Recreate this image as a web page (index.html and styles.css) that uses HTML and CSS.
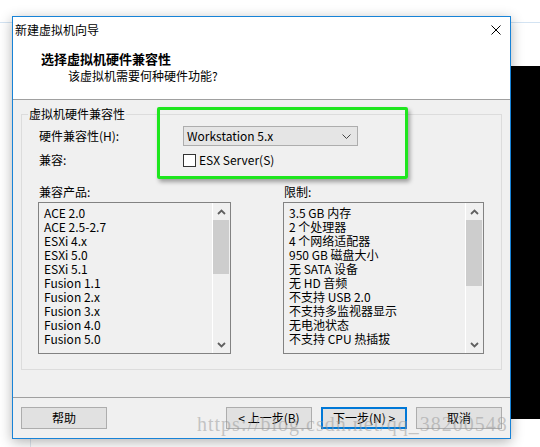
FILE: index.html
```html
<!DOCTYPE html>
<html lang="zh-CN">
<head>
  <meta charset="UTF-8" />
  <title>新建虚拟机向导</title>
  <link rel="stylesheet" href="styles.css">
</head>
<body>
  <div class="desk">
    <div class="back-line"></div>
    <div class="back-edge"></div>
    <div class="black-win"></div>

    <div class="dialog">
      <div class="titlebar">
        <span class="title">新建虚拟机向导</span>
        <svg class="close" width="10" height="10" viewBox="0 0 10 10">
          <path d="M0.5 0.5 L9.5 9.5 M9.5 0.5 L0.5 9.5" stroke="#000" stroke-width="1" fill="none" />
        </svg>
      </div>

      <div class="header">
        <div class="heading">选择虚拟机硬件兼容性</div>
        <div class="subheading">该虚拟机需要何种硬件功能?</div>
      </div>

      <div class="content">
        <div class="group">
          <span class="group-title">虚拟机硬件兼容性</span>

          <div class="form-row">
            <span class="label">硬件兼容性(H):</span>
            <div class="select">
              <span>Workstation 5.x</span>
              <svg width="9" height="5" viewBox="0 0 9 5">
                <polyline points="0.5,0.5 4.5,4.5 8.5,0.5" stroke="#444" stroke-width="1" fill="none" />
              </svg>
            </div>
          </div>

          <div class="form-row">
            <span class="label">兼容:</span>
            <label class="check"><span class="box"></span>ESX Server(S)</label>
          </div>

          <div class="lists">
            <div class="list-col">
              <div class="list-label">兼容产品:</div>
              <div class="listbox">
                <ul class="items">
                  <li>ACE 2.0</li>
                  <li>ACE 2.5-2.7</li>
                  <li>ESXi 4.x</li>
                  <li>ESXi 5.0</li>
                  <li>ESXi 5.1</li>
                  <li>Fusion 1.1</li>
                  <li>Fusion 2.x</li>
                  <li>Fusion 3.x</li>
                  <li>Fusion 4.0</li>
                  <li>Fusion 5.0</li>
                </ul>
                <div class="scrollbar">
                  <div class="arrow">
                    <svg width="9" height="6" viewBox="0 0 9 6"><polyline points="1,5 4.5,1.5 8,5" stroke="#606060" stroke-width="1.8" fill="none" /></svg>
                  </div>
                  <div class="track"><div class="thumb thumb-left"></div></div>
                  <div class="arrow">
                    <svg width="9" height="6" viewBox="0 0 9 6"><polyline points="1,1 4.5,4.5 8,1" stroke="#606060" stroke-width="1.8" fill="none" /></svg>
                  </div>
                </div>
              </div>
            </div>

            <div class="list-col">
              <div class="list-label">限制:</div>
              <div class="listbox">
                <ul class="items">
                  <li>3.5 GB 内存</li>
                  <li>2 个处理器</li>
                  <li>4 个网络适配器</li>
                  <li>950 GB 磁盘大小</li>
                  <li>无 SATA 设备</li>
                  <li>无 HD 音频</li>
                  <li>不支持 USB 2.0</li>
                  <li>不支持多监视器显示</li>
                  <li>无电池状态</li>
                  <li>不支持 CPU 热插拔</li>
                </ul>
                <div class="scrollbar">
                  <div class="arrow">
                    <svg width="9" height="6" viewBox="0 0 9 6"><polyline points="1,5 4.5,1.5 8,5" stroke="#606060" stroke-width="1.8" fill="none" /></svg>
                  </div>
                  <div class="track"><div class="thumb thumb-right"></div></div>
                  <div class="arrow">
                    <svg width="9" height="6" viewBox="0 0 9 6"><polyline points="1,1 4.5,4.5 8,1" stroke="#606060" stroke-width="1.8" fill="none" /></svg>
                  </div>
                </div>
              </div>
            </div>
          </div>
        </div>
      </div>

      <div class="footer">
        <button class="btn">帮助</button>
        <div class="btn-group">
          <button class="btn">&lt; 上一步(B)</button>
          <button class="btn btn-default">下一步(N) &gt;</button>
          <button class="btn">取消</button>
        </div>
      </div>
    </div>

    <div class="highlight"></div>
    <div class="watermark">https://blog.csdn.net/qq_38200548</div>
  </div>
</body>
</html>
```

FILE: styles.css
```css
* {
  box-sizing: border-box;
}

html, body {
  margin: 0;
  padding: 0;
  width: 540px;
  height: 447px;
  overflow: hidden;
  background: #fff;
  font-family: "Noto Sans CJK SC", sans-serif;
  font-size: 12px;
  color: #000;
}

.desk {
  position: relative;
  width: 540px;
  height: 447px;
}

/* window behind the wizard */
.back-line {
  position: absolute;
  left: 0;
  right: 0;
  top: 22px;
  height: 1px;
  background: #d3e3f2;
}

.back-edge {
  position: absolute;
  left: 30px;
  top: 438px;
  bottom: 0;
  width: 1px;
  background: #dfe7ef;
}

.black-win {
  position: absolute;
  left: 511px;
  top: 66px;
  width: 29px;
  height: 353px;
  background: #000;
}

.dialog {
  position: absolute;
  left: 12px;
  top: 16px;
  width: 499px;
  height: 423px;
  border: 1px solid #1883d7;
  background: #f0f0f0;
  display: flex;
  flex-direction: column;
  box-shadow: 0 3px 12px rgba(0, 0, 0, 0.3);
}

.titlebar {
  height: 26px;
  flex: none;
  background: #fff;
  display: flex;
  align-items: center;
  justify-content: space-between;
  padding: 0 9px 0 2px;
  line-height: 16px;
}

.header {
  height: 57px;
  flex: none;
  background: #fff;
  border-bottom: 1px solid #a0a0a0;
  padding: 7px 0 0 28px;
}

.heading {
  font-size: 13px;
  font-weight: bold;
  line-height: 17px;
}

.subheading {
  margin-left: 27px;
  line-height: 17px;
}

.content {
  height: 297px;
  flex: none;
  padding: 14px 8px 0 8px;
}

.group {
  position: relative;
  height: 256px;
  border: 1px solid #dcdcdc;
  padding: 11px 17px 0 16px;
}

.group-title {
  position: absolute;
  left: 6px;
  top: -9px;
  padding: 0 1px;
  background: #f0f0f0;
  line-height: 16px;
}

.form-row {
  display: flex;
  align-items: center;
  height: 20px;
}

.form-row + .form-row {
  margin-top: 4px;
}

.label {
  width: 145px;
  padding-left: 1px;
  line-height: 16px;
}

.select {
  width: 175px;
  height: 20px;
  border: 1px solid #adadad;
  background: #e5e5e5;
  display: flex;
  align-items: center;
  justify-content: space-between;
  padding: 0 6px 0 3px;
  line-height: 16px;
}

.check {
  display: flex;
  align-items: center;
  gap: 3px;
  line-height: 16px;
}

.box {
  width: 13px;
  height: 13px;
  border: 1px solid #333;
  background: #fff;
}

.lists {
  display: grid;
  grid-template-columns: 193px 201px;
  column-gap: 52px;
  margin-top: 14px;
}

.list-label {
  line-height: 16px;
  padding-left: 1px;
  margin-bottom: 2px;
}

.listbox {
  height: 152px;
  border: 1px solid #828282;
  background: #f0f0f0;
  display: flex;
}

.items {
  flex: 1;
  list-style: none;
  margin: 0;
  padding: 3px 0 0 5px;
  line-height: 14px;
  overflow: hidden;
  white-space: nowrap;
}

.scrollbar {
  width: 18px;
  border-left: 1px solid #fff;
  display: flex;
  flex-direction: column;
}

.arrow {
  height: 17px;
  display: flex;
  align-items: center;
  justify-content: center;
}

.track {
  flex: 1;
  padding-right: 1px;
}

.thumb {
  background: #cdcdcd;
}

.thumb-left {
  height: 54px;
}

.thumb-right {
  height: 66px;
}

.footer {
  flex: 1;
  border-top: 1px solid #a0a0a0;
  display: flex;
  align-items: flex-start;
  padding: 9px 8px 0 8px;
}

.btn-group {
  margin-left: auto;
  display: flex;
  gap: 9px;
}

.btn {
  width: 86px;
  height: 22px;
  border: 1px solid #adadad;
  background: #e1e1e1;
  font-family: "Noto Sans CJK SC", sans-serif;
  font-size: 12px;
  line-height: 16px;
  color: #000;
  padding: 0;
}

.btn-default {
  border: 2px solid #0078d7;
}

/* annotation drawn over the screenshot */
.highlight {
  position: absolute;
  left: 157px;
  top: 107px;
  width: 251px;
  height: 72px;
  border: 3px solid #1ee61e;
  border-radius: 2px;
  box-shadow: 2px 3px 4px rgba(0, 0, 0, 0.35);
}

.watermark {
  position: absolute;
  left: 197px;
  top: 412px;
  font-family: "Liberation Serif", serif;
  font-size: 20px;
  letter-spacing: 1px;
  color: rgba(150, 150, 150, 0.5);
  white-space: nowrap;
  line-height: 24px;
}
```
